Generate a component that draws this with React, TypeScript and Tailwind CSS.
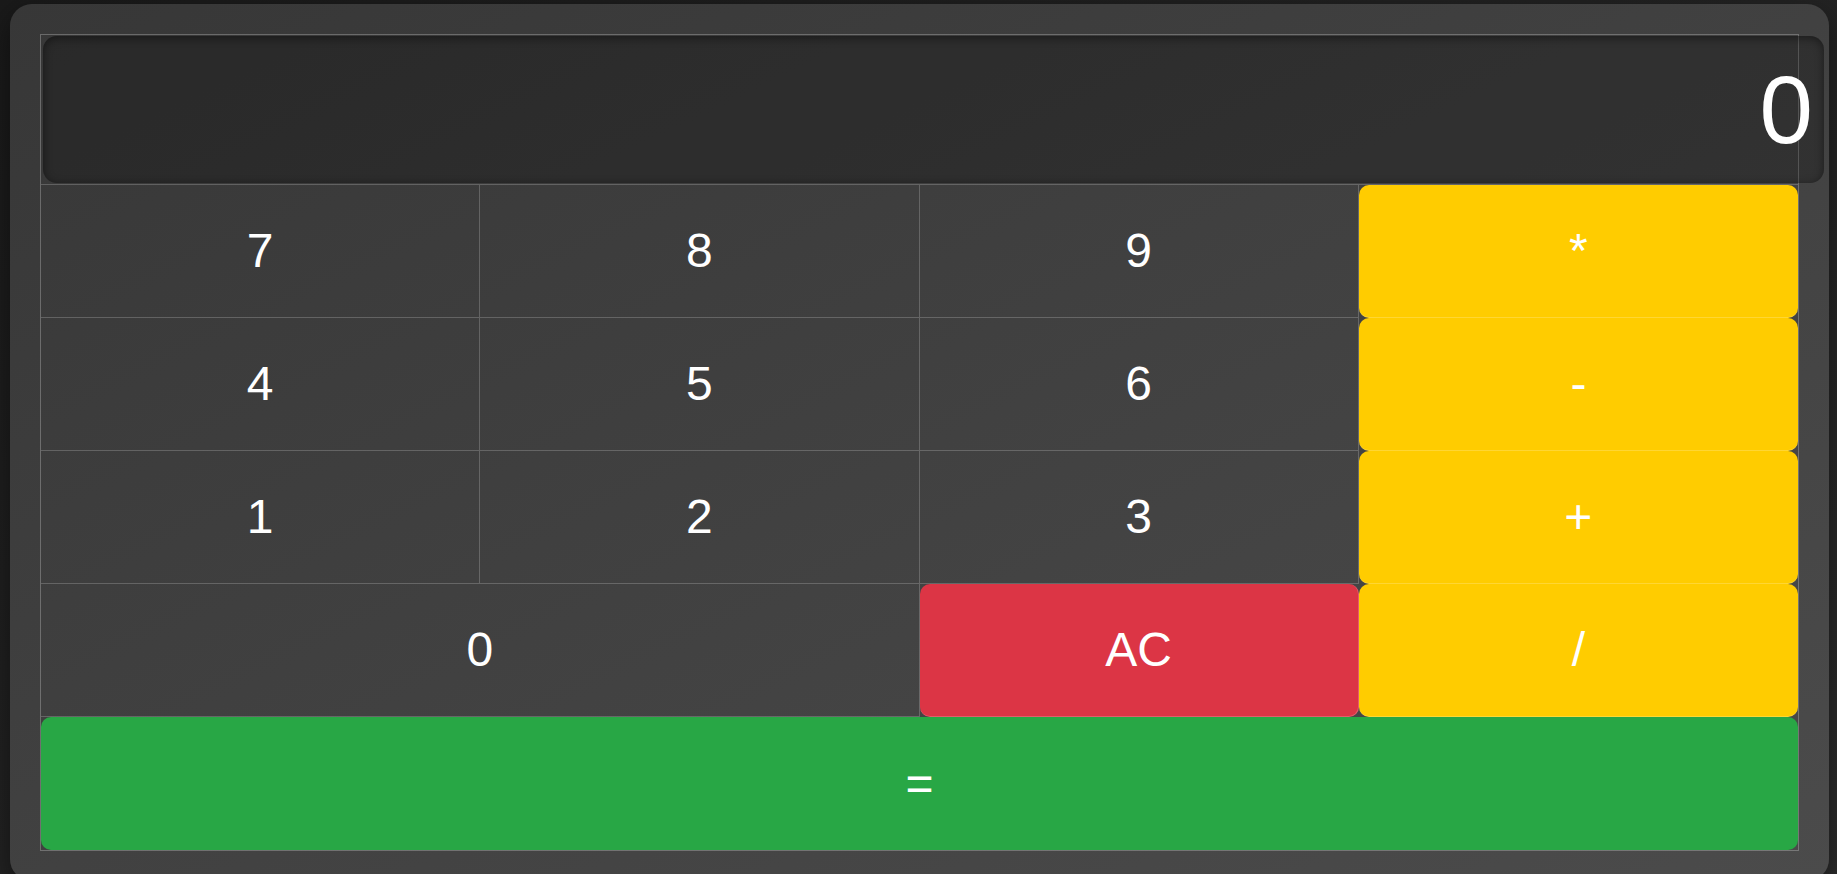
import React from "react";

type Key = {
  label: string;
  kind?: "num" | "op" | "clear" | "equals";
  span?: string;
  edge?: boolean;
};

const keys: Key[] = [
  { label: "7" },
  { label: "8" },
  { label: "9" },
  { label: "*", kind: "op", edge: true },
  { label: "4" },
  { label: "5" },
  { label: "6" },
  { label: "-", kind: "op", edge: true },
  { label: "1" },
  { label: "2" },
  { label: "3" },
  { label: "+", kind: "op", edge: true },
  { label: "0", span: "col-span-2" },
  { label: "AC", kind: "clear" },
  { label: "/", kind: "op", edge: true },
];

function keyClass(k: Key) {
  const base =
    "flex h-[133px] items-center justify-center border-b border-white/20 text-5xl font-normal text-white";
  const right = k.edge ? "" : " border-r";
  const span = k.span ? ` ${k.span}` : "";
  if (k.kind === "op") return `${base}${right}${span} rounded-[10px] bg-[#ffcc00]`;
  if (k.kind === "clear") return `${base}${right}${span} rounded-[10px] bg-[#dc3545]`;
  return `${base}${right}${span} bg-transparent`;
}

export default function App() {
  return (
    <div className="min-h-screen bg-gradient-to-br from-[#1a1a1a] to-[#2d2d2d] pl-[10px] pr-[8px] pt-[4px] pb-[8px] font-['Liberation_Sans',Arial,sans-serif]">
      <div className="rounded-[22px] bg-gradient-to-br from-[#373737] to-[#4b4b4b] p-[30px] shadow-[0_10px_30px_rgba(0,0,0,0.5)]">
        <div className="grid grid-cols-4 border border-white/25">
          <div className="col-span-4 h-[150px] border-b border-white/20 pl-[2px] pt-[1px] pb-[1px]">
            <div className="flex h-full w-[calc(100%+26px)] items-center justify-end rounded-[14px] bg-black/25 pr-[11px] text-8xl leading-none text-white shadow-[inset_0_2px_10px_rgba(0,0,0,0.45)]">
              0
            </div>
          </div>
          {keys.map((k) => (
            <button key={k.label} type="button" className={keyClass(k)}>
              {k.label}
            </button>
          ))}
          <button
            type="button"
            className="col-span-4 flex h-[133px] items-center justify-center rounded-[10px] bg-[#28a745] text-5xl text-white"
          >
            =
          </button>
        </div>
      </div>
    </div>
  );
}
